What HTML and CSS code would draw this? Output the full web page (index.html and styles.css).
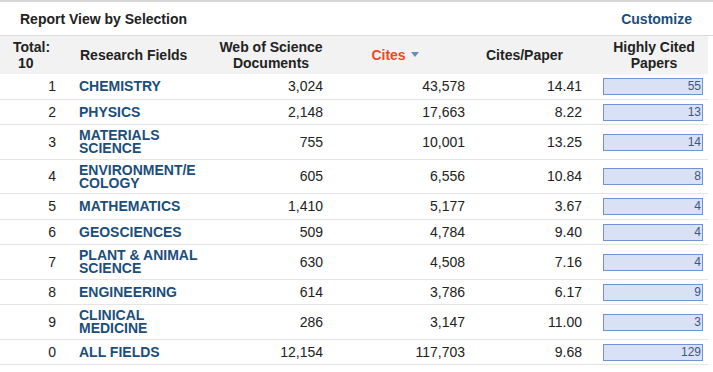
FILE: index.html
```html
<!DOCTYPE html>
<html>
<head>
<meta charset="utf-8">
<link rel="stylesheet" href="styles.css">
</head>
<body>
<div class="panel">
  <div class="titlebar">
    <span class="title">Report View by Selection</span>
    <a class="customize" href="#">Customize</a>
  </div>
  <table class="report">
    <colgroup>
      <col class="c-rank"><col class="c-field"><col class="c-docs"><col class="c-cites"><col class="c-cpp"><col class="c-hcp">
    </colgroup>
    <thead>
      <tr>
        <th class="h-total">Total:<br><span class="tot">10</span></th>
        <th class="h-field">Research Fields</th>
        <th class="h-docs">Web of Science<br>Documents</th>
        <th class="h-cites"><span class="sorted">Cites</span><span class="arrow"></span></th>
        <th class="h-cpp">Cites/Paper</th>
        <th class="h-hcp">Highly Cited<br>Papers</th>
      </tr>
    </thead>
    <tbody>
      <tr><td class="rank">1</td><td class="field"><a href="#">CHEMISTRY</a></td><td class="num">3,024</td><td class="num">43,578</td><td class="num">14.41</td><td class="hcp"><div class="bar">55</div></td></tr>
      <tr><td class="rank">2</td><td class="field"><a href="#">PHYSICS</a></td><td class="num">2,148</td><td class="num">17,663</td><td class="num">8.22</td><td class="hcp"><div class="bar">13</div></td></tr>
      <tr><td class="rank">3</td><td class="field"><a href="#">MATERIALS<br>SCIENCE</a></td><td class="num">755</td><td class="num">10,001</td><td class="num">13.25</td><td class="hcp"><div class="bar">14</div></td></tr>
      <tr><td class="rank">4</td><td class="field"><a href="#">ENVIRONMENT/E<br>COLOGY</a></td><td class="num">605</td><td class="num">6,556</td><td class="num">10.84</td><td class="hcp"><div class="bar">8</div></td></tr>
      <tr><td class="rank">5</td><td class="field"><a href="#">MATHEMATICS</a></td><td class="num">1,410</td><td class="num">5,177</td><td class="num">3.67</td><td class="hcp"><div class="bar">4</div></td></tr>
      <tr><td class="rank">6</td><td class="field"><a href="#">GEOSCIENCES</a></td><td class="num">509</td><td class="num">4,784</td><td class="num">9.40</td><td class="hcp"><div class="bar">4</div></td></tr>
      <tr><td class="rank">7</td><td class="field"><a href="#">PLANT &amp; ANIMAL<br>SCIENCE</a></td><td class="num">630</td><td class="num">4,508</td><td class="num">7.16</td><td class="hcp"><div class="bar">4</div></td></tr>
      <tr><td class="rank">8</td><td class="field"><a href="#">ENGINEERING</a></td><td class="num">614</td><td class="num">3,786</td><td class="num">6.17</td><td class="hcp"><div class="bar">9</div></td></tr>
      <tr><td class="rank">9</td><td class="field"><a href="#">CLINICAL<br>MEDICINE</a></td><td class="num">286</td><td class="num">3,147</td><td class="num">11.00</td><td class="hcp"><div class="bar">3</div></td></tr>
      <tr><td class="rank">0</td><td class="field"><a href="#">ALL FIELDS</a></td><td class="num">12,154</td><td class="num">117,703</td><td class="num">9.68</td><td class="hcp"><div class="bar">129</div></td></tr>
    </tbody>
  </table>
</div>
</body>
</html>
```

FILE: styles.css
```css
html, body {
  margin: 0;
  padding: 0;
  background: #ffffff;
}
body {
  font-family: "Liberation Sans", Arial, Helvetica, sans-serif;
  font-size: 14px;
  color: #222222;
}
.panel {
  width: 713px;
  border-top: 2px solid #d6d6d6;
}
.titlebar {
  display: flex;
  justify-content: space-between;
  align-items: center;
  height: 33px;
  padding: 0 21px 0 20px;
  border-bottom: 1px solid #dcdcdc;
}
.title {
  font-weight: bold;
  color: #222222;
}
.customize {
  font-weight: bold;
  color: #1b4e7b;
  text-decoration: none;
}
.report {
  width: 708px;
  border-collapse: collapse;
  table-layout: fixed;
}
.c-rank { width: 66px; }
.c-field { width: 139px; }
.c-docs { width: 128px; }
.c-cites { width: 142px; }
.c-cpp { width: 117px; }
.c-hcp { width: 116px; }

thead th {
  background: #f2f2f2;
  height: 32px;
  padding: 3px 0;
  line-height: 16px;
  font-weight: bold;
  color: #222222;
  vertical-align: middle;
  text-align: center;
}
.h-total {
  text-align: left;
  padding-left: 13px;
}
.tot { padding-left: 5px; }
.h-field {
  text-align: left;
  padding-left: 14px;
}
.h-docs { padding-left: 4px; }
.h-cites { padding-right: 18px; }
.h-cpp { padding-right: 18px; }
.h-hcp { padding-left: 8px; }
.sorted { color: #ec4a1d; }
.arrow {
  display: inline-block;
  margin-left: 5px;
  width: 0;
  height: 0;
  border-left: 4px solid transparent;
  border-right: 4px solid transparent;
  border-top: 5px solid #6a8ac0;
  vertical-align: 3px;
}

tbody td {
  box-sizing: border-box;
  height: 25px;
  padding: 4px 0 3.5px;
  line-height: 13px;
  border-bottom: 1px solid #e4e4e4;
  vertical-align: middle;
}
.rank {
  text-align: right;
  padding-right: 10px;
}
.field {
  padding-left: 13px;
}
.field a {
  display: block;
  line-height: 13px;
  font-weight: bold;
  color: #1b4e7b;
  text-decoration: none;
}
.num {
  text-align: right;
  padding-right: 10px;
}
.hcp {
  padding-left: 11px;
}
.bar {
  box-sizing: border-box;
  width: 100px;
  height: 17px;
  border: 1px solid #7093d6;
  background: #d9e2f4;
  color: #3b5687;
  font-size: 12px;
  line-height: 15px;
  text-align: right;
  padding-right: 1px;
}
```
